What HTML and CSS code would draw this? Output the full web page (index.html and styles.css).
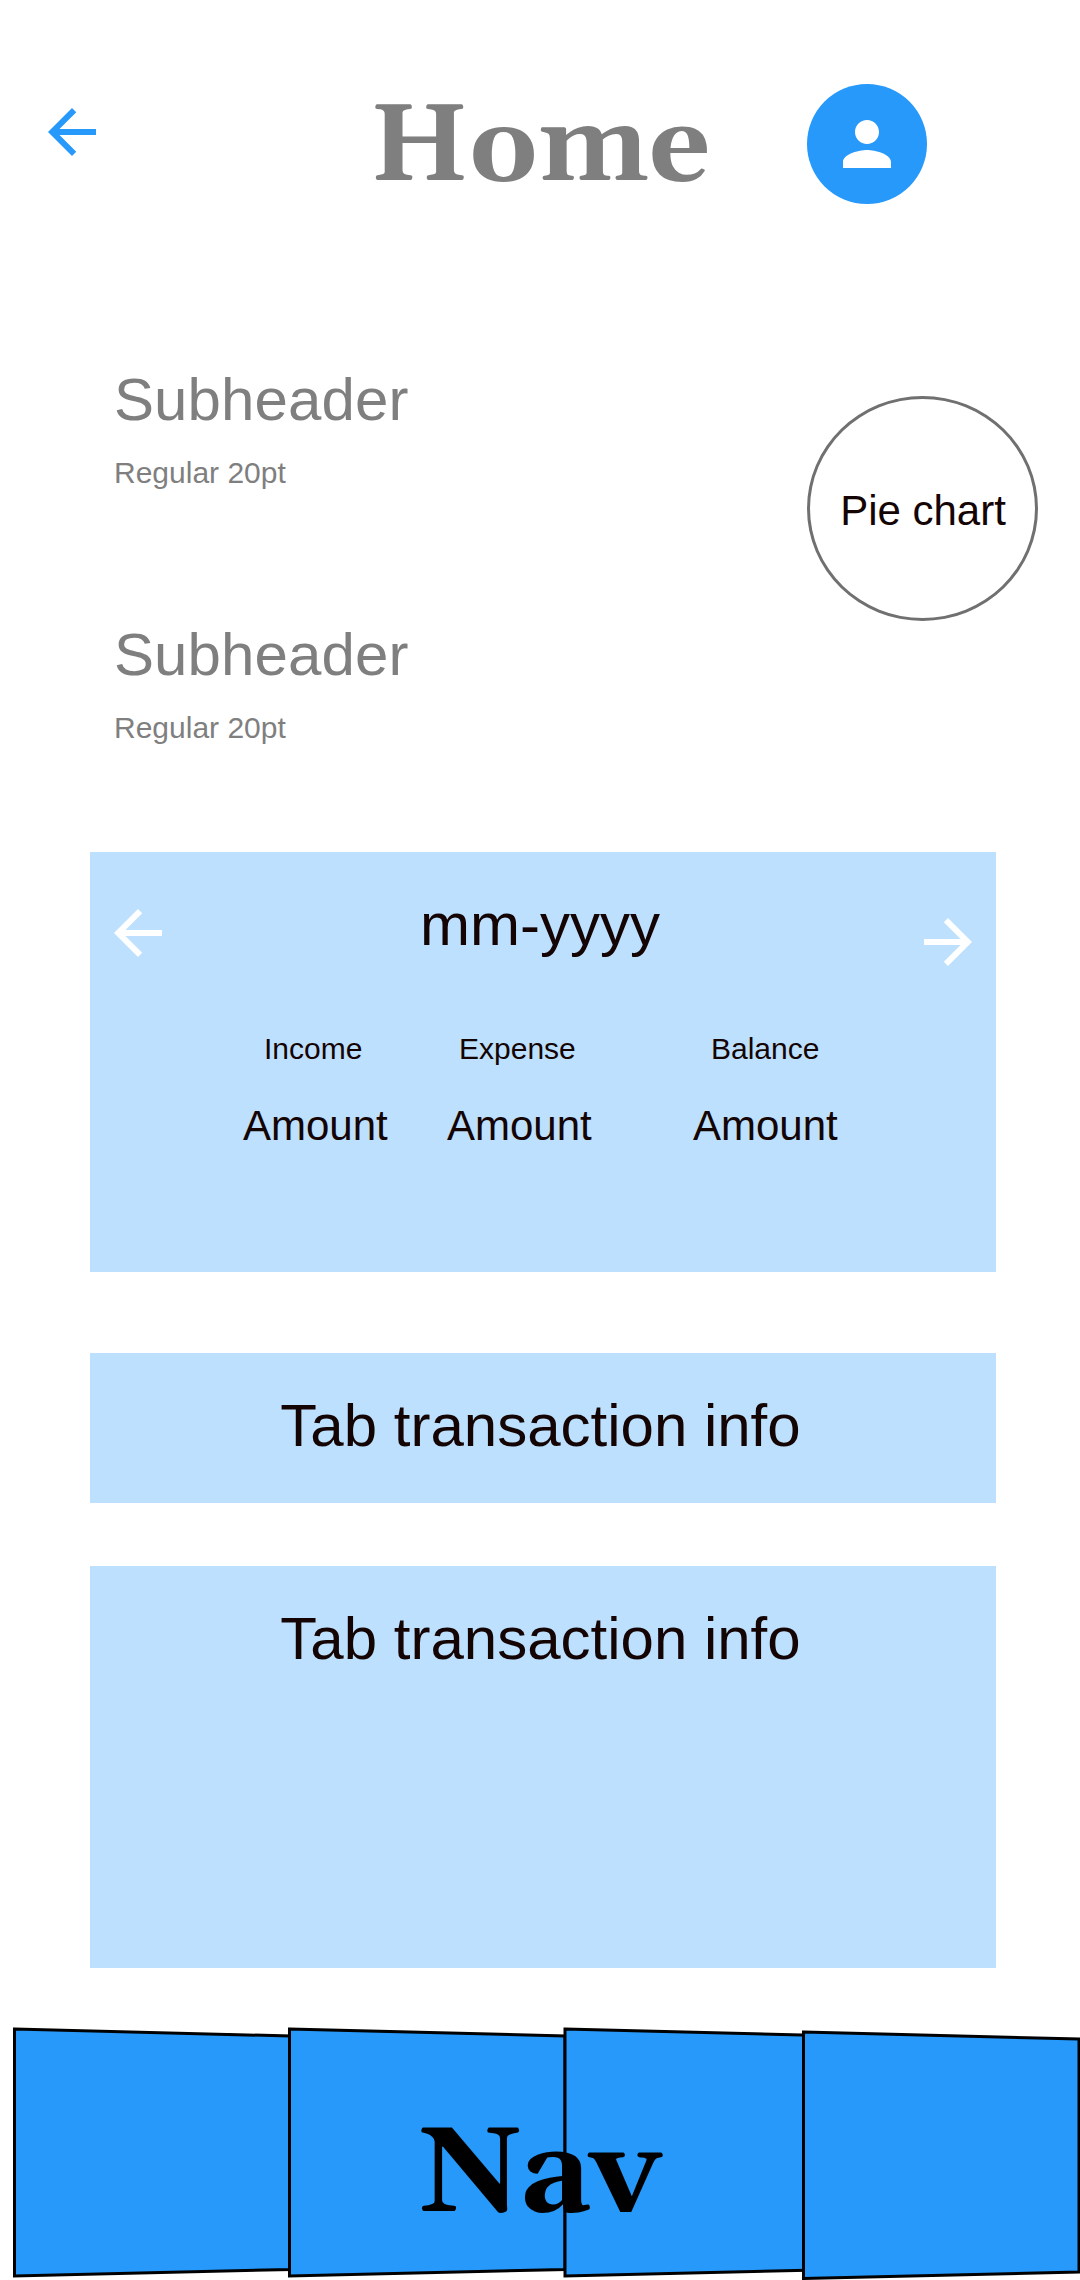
FILE: index.html
```html
<!DOCTYPE html>
<html lang="en">
<head>
<meta charset="utf-8">
<title>Home</title>
<link rel="stylesheet" href="styles.css">
</head>
<body>
<div class="screen">
  <header class="header">
    <svg class="icon back" viewBox="0 0 24 24"><path d="M20 11H7.830l5.590-5.590L12 4l-8 8 8 8 1.410-1.410L7.830 13H20v-2z"/></svg>
    <h1 class="title">Home</h1>
    <div class="avatar">
      <svg class="icon" viewBox="0 0 24 24"><path d="M12 12c2.210 0 4-1.790 4-4s-1.790-4-4-4-4 1.790-4 4 1.790 4 4 4zm0 2c-2.670 0-8 1.340-8 4v2h16v-2c0-2.660-5.330-4-8-4z"/></svg>
    </div>
  </header>
  <section class="overview">
    <div class="summaries">
      <div class="summary"><h2 class="large">Subheader</h2><p class="small">Regular 20pt</p></div>
      <div class="summary"><h2 class="large">Subheader</h2><p class="small">Regular 20pt</p></div>
    </div>
    <div class="pie">Pie chart</div>
  </section>
  <main class="cards">
    <section class="card month">
      <div class="month-bar">
        <svg class="icon prev" viewBox="0 0 24 24"><path d="M20 11H7.830l5.590-5.590L12 4l-8 8 8 8 1.410-1.410L7.830 13H20v-2z"/></svg>
        <h2 class="large">mm-yyyy</h2>
        <svg class="icon next" viewBox="0 0 24 24"><path d="M12 4l-1.410 1.410L16.170 11H4v2h12.170l-5.580 5.590L12 20l8-8z"/></svg>
      </div>
      <div class="totals">
        <div class="total"><p class="small income">Income</p><p class="amount">Amount</p></div>
        <div class="total"><p class="small expense">Expense</p><p class="amount">Amount</p></div>
        <div class="total"><p class="small balance">Balance</p><p class="amount">Amount</p></div>
      </div>
    </section>
    <section class="card tab"><h2 class="large">Tab transaction info</h2></section>
    <section class="card tab tall"><h2 class="large">Tab transaction info</h2></section>
  </main>
  <nav class="nav">
    <svg class="panels" viewBox="0 2020 1080 260">
      <path d="M14.500 2029L290 2036V2269.500L14.500 2276z"/>
      <path d="M289.500 2029L565 2036V2269.500L289.500 2276z"/>
      <path d="M565 2029L840.500 2036V2269.500L565 2276z"/>
      <path d="M803.500 2032L1079 2039V2272L803.500 2278.500z"/>
    </svg>
    <span class="nav-label">Nav</span>
  </nav>
</div>
</body>
</html>
```
FILE: styles.css
```css
* { box-sizing: border-box; margin: 0; padding: 0; }
body { background: #fff; font-family: "Liberation Sans", Arial, sans-serif; color: #140404; }
h1, h2 { font-weight: 400; }
.screen { width: 1080px; height: 2280px; overflow: hidden; display: flex; flex-direction: column; }
.icon { width: 72px; height: 72px; display: block; fill: #fff; flex: none; }
.large { font-size: 60px; line-height: 68px; white-space: nowrap; }
.small { font-size: 30px; line-height: 34px; white-space: nowrap; }

.header { height: 360px; padding: 84px 153px 0 36px; display: flex; align-items: flex-start; }
.back { fill: #2699fb; margin-top: 12px; }
.title { margin: 5px 0 0 262px; width: 437px; font: bold 108px/120px Gelasio, Georgia, "Liberation Serif", serif; letter-spacing: 0.6px; color: #7f7f7f; white-space: nowrap; }
.avatar { width: 120px; height: 120px; border-radius: 50%; background: #2699fb; display: flex; align-items: center; justify-content: center; flex: none; }

.overview { height: 492px; padding: 0 42px 0 114px; display: flex; justify-content: space-between; align-items: flex-start; }
.summaries { display: flex; flex-direction: column; gap: 130px; padding-top: 6px; color: #7f7f7f; }
.summary .large { letter-spacing: 0.1px; }
.summary .small { margin-top: 22px; margin-bottom: 1px; }
.summaries { gap: 130px; }
.pie { width: 231px; height: 225px; margin-top: 36px; padding: 5px 0 0 1px; border: 3px solid #707070; border-radius: 50%; display: flex; align-items: center; justify-content: center; font-size: 42px; line-height: 48px; white-space: nowrap; }

.cards { width: 906px; height: 1168px; margin-left: 90px; }
.card { background: #bce0fd; }
.month { height: 420px; }
.month-bar { display: flex; justify-content: space-between; align-items: flex-start; padding: 39px 12px 0; }
.month-bar .large { padding-right: 6px; }
.prev { margin-top: 6px; }
.next { margin-top: 15px; }
.totals { display: grid; grid-template-columns: 204px 246px 150px; margin: 54px 0 0 153px; }
.total .amount { font-size: 42px; line-height: 48px; margin-top: 36px; }
.income { padding-left: 21px; }
.expense { padding-left: 12px; }
.balance { padding-left: 18px; }
.tab { height: 150px; margin-top: 81px; padding: 39px 5px 0 0; text-align: center; }
.tab.tall { height: 402px; margin-top: 63px; }

.nav { height: 260px; display: grid; }
.panels { grid-area: 1 / 1; width: 1080px; height: 260px; fill: #2699fb; stroke: #000; stroke-width: 3; }
.nav-label { grid-area: 1 / 1; z-index: 1; padding: 88px 0 0 419px; font: bold 120px/136px Gelasio, Georgia, "Liberation Serif", serif; letter-spacing: -0.4px; color: #000; }
```
